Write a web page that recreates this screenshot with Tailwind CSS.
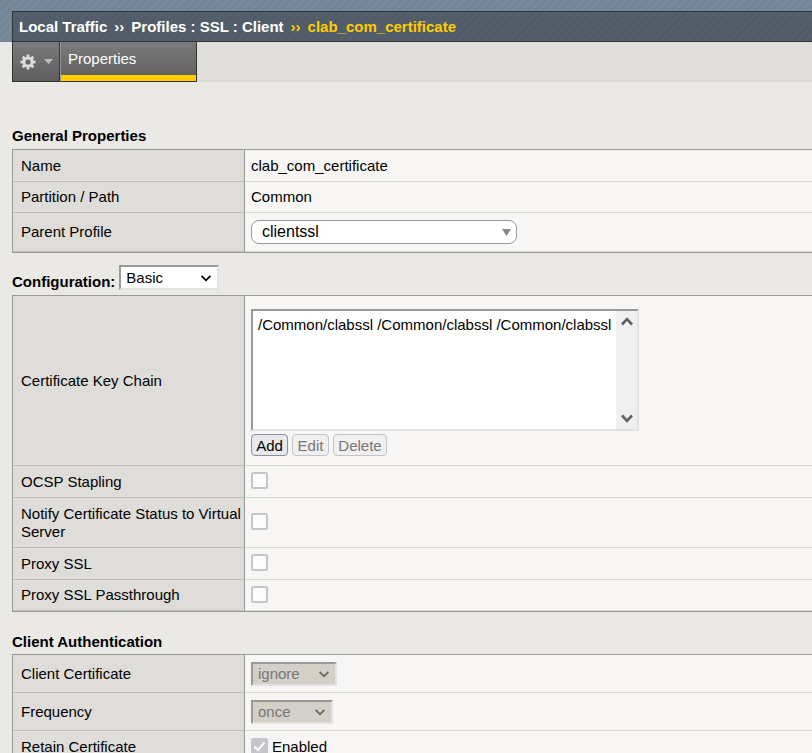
<!DOCTYPE html>
<html lang="en">
<head>
  <meta charset="UTF-8">
  <meta name="viewport" content="width=device-width, initial-scale=1">
  <title>Local Traffic - Profiles : SSL : Client</title>
  <!-- Tailwind CSS CDN -->
  <script src="https://cdn.jsdelivr.net/npm/@tailwindcss/browser@4"></script>
</head>
<body class="h-screen overflow-x-hidden overflow-y-auto [scrollbar-width:none] bg-[#eae9e5] font-['Liberation_Sans',Arial,sans-serif] text-[15px] leading-[18px] text-black">

  <!-- Breadcrumb -->
  <header class="pl-3 pt-[11px] bg-[repeating-linear-gradient(135deg,#738598_0px,#738598_3px,#788a9a_4px,#788a9a_6px)]">
    <nav class="flex items-center h-[31px] pl-1.5 border-y border-l border-[#2f363b] font-bold text-white whitespace-pre bg-[repeating-linear-gradient(135deg,#505c69_0px,#505c69_3px,#555f69_4px,#555f69_6px)]">
      <a href="#">Local Traffic</a>
      <span class="px-[7px]">››</span>
      <a href="#">Profiles : SSL : Client</a>
      <span class="px-[7px] text-[#ffcc00]">››</span>
      <span class="text-[#ffcc00]">clab_com_certificate</span>
    </nav>
  </header>

  <!-- Tabs -->
  <div class="ml-3 flex h-10 bg-[#dedddA]">
    <button type="button" aria-label="Options" class="flex items-center w-12 pl-[7px] gap-2 border-x border-b border-[#333] bg-linear-to-b from-[#7b7b7b] to-[#5e5e5e]">
      <svg class="w-4 h-4 shrink-0" viewBox="0 0 16 16">
        <g fill="#dcdcdc">
          <rect x="6.6" y="0.5" width="2.8" height="15"/>
          <rect x="6.6" y="0.5" width="2.8" height="15" transform="rotate(45 8 8)"/>
          <rect x="6.6" y="0.5" width="2.8" height="15" transform="rotate(90 8 8)"/>
          <rect x="6.6" y="0.5" width="2.8" height="15" transform="rotate(135 8 8)"/>
          <circle cx="8" cy="8" r="5.6"/>
        </g>
        <circle cx="8" cy="8" r="2.6" fill="#666"/>
      </svg>
      <svg class="w-[9px] h-[5px] shrink-0" viewBox="0 0 9 5"><path d="M0 0h9L4.500 5z" fill="#bdbdbd"/></svg>
    </button>
    <a href="#" class="w-[137px] pl-[7px] pt-2 border-l border-l-[#999] border-r border-r-[#333] border-b border-b-[#333] text-white bg-linear-to-b from-[#7b7b7b] to-[#5e5e5e] shadow-[inset_0_-6px_#ffcc00]">Properties</a>
  </div>

  <main class="pl-3">
    <!-- General Properties -->
    <h2 class="pt-[45px] h-[67px] font-bold">General Properties</h2>
    <table class="w-full table-fixed border-separate border-spacing-0 border-y border-l border-[#999]">
      <tbody>
        <tr>
          <th scope="row" class="w-[232px] h-8 pl-2 pr-0 text-left font-normal bg-[#dedddA] border-b border-b-[#c0bfbd] border-r border-r-[#999]">Name</th>
          <td class="pl-1.5 bg-[#f7f6f4] border-b border-[#d9d9d7]">clab_com_certificate</td>
        </tr>
        <tr>
          <th scope="row" class="h-[31px] pl-2 pr-0 text-left font-normal bg-[#dedddA] border-b border-b-[#c0bfbd] border-r border-r-[#999]">Partition / Path</th>
          <td class="pl-1.5 bg-[#f7f6f4] border-b border-[#d9d9d7]">Common</td>
        </tr>
        <tr>
          <th scope="row" class="h-[39px] pl-2 pr-0 text-left font-normal bg-[#dedddA] border-b border-b-[#c0bfbd] border-r border-r-[#999]"><label for="parentProfile">Parent Profile</label></th>
          <td class="pl-1.5 bg-[#f7f6f4] border-b border-[#d9d9d7]">
            <div class="relative w-[266px]">
              <select id="parentProfile" class="block appearance-none w-full h-6 pl-2.5 text-[16px] leading-[18px] bg-white border border-[#999] rounded-lg">
                <option>clientssl</option>
              </select>
              <svg class="absolute right-1.5 top-[9px] w-[9px] h-[7px] pointer-events-none" viewBox="0 0 9 7"><path d="M0 0h9L4.500 7z" fill="#888"/></svg>
            </div>
          </td>
        </tr>
      </tbody>
    </table>

    <!-- Configuration -->
    <div class="flex items-start h-[42px] pt-3 gap-1">
      <label for="configuration" class="pt-2 font-bold">Configuration:</label>
      <div class="relative w-[100px]">
        <select id="configuration" class="block appearance-none w-full h-[25px] pl-[5px] leading-[18px] bg-white border-2 border-t-[#999] border-l-[#999] border-r-[#e3e3e3] border-b-[#e3e3e3]">
          <option>Basic</option>
          <option>Advanced</option>
        </select>
        <svg class="absolute right-2 top-[10px] w-[10px] h-[7px] pointer-events-none" viewBox="0 0 10 7" fill="none" stroke="#000" stroke-width="1.7"><path d="M0.600 0.800L5 5.300L9.400 0.800"/></svg>
      </div>
    </div>
    <table class="w-full table-fixed border-separate border-spacing-0 border-y border-l border-[#999]">
      <tbody>
        <tr>
          <th scope="row" class="w-[232px] h-[170px] pl-2 pr-0 text-left font-normal bg-[#dedddA] border-b border-b-[#c0bfbd] border-r border-r-[#999]"><label for="keyChain">Certificate Key Chain</label></th>
          <td class="pl-1.5 pt-1 bg-[#f7f6f4] border-b border-[#d9d9d7]">
            <div class="flex w-[388px] h-[122px] bg-white border-2 border-t-[#999] border-l-[#999] border-r-[#e3e3e3] border-b-[#e3e3e3]">
              <select id="keyChain" size="6" class="flex-1 min-w-0 appearance-none overflow-hidden pt-[5px]">
                <option class="p-0 pl-[5px] min-h-0">/Common/clabssl /Common/clabssl /Common/clabssl</option>
              </select>
              <div class="flex flex-col items-center justify-between w-[21px] pt-1.5 pb-1.5 bg-[#f0f0f0]">
                <svg class="w-3 h-[9px]" viewBox="0 0 12 9" fill="none" stroke="#606060" stroke-width="2.600"><path d="M1 7.500L6 2.200L11 7.500"/></svg>
                <svg class="w-3 h-[9px]" viewBox="0 0 12 9" fill="none" stroke="#606060" stroke-width="2.600"><path d="M1 1.500L6 6.800L11 1.500"/></svg>
              </div>
            </div>
            <div class="flex gap-1 pt-[3px]">
              <button type="button" class="w-[37px] h-[22px] pt-px bg-[#e9e9ed] border border-[#8f8f9d] rounded">Add</button>
              <button type="button" disabled class="w-[37px] h-[22px] pt-px bg-[#f0f0f1] border border-[#c4c4cc] rounded text-[#777]">Edit</button>
              <button type="button" disabled class="w-[54px] h-[22px] pt-px bg-[#f0f0f1] border border-[#c4c4cc] rounded text-[#777]">Delete</button>
            </div>
          </td>
        </tr>
        <tr>
          <th scope="row" class="h-8 pl-2 pr-0 text-left font-normal bg-[#dedddA] border-b border-b-[#c0bfbd] border-r border-r-[#999]"><label for="ocsp">OCSP Stapling</label></th>
          <td class="pl-1.5 pb-0.5 bg-[#f7f6f4] border-b border-[#d9d9d7]"><input type="checkbox" id="ocsp" disabled class="block appearance-none w-[17px] h-[17px] bg-[#fbfbfa] border-2 border-[#c5c5cc] rounded-xs"></td>
        </tr>
        <tr>
          <th scope="row" class="h-[50px] pl-2 pr-0 text-left font-normal bg-[#dedddA] border-b border-b-[#c0bfbd] border-r border-r-[#999]"><label for="notifyStatus">Notify Certificate Status to Virtual Server</label></th>
          <td class="pl-1.5 pb-0.5 bg-[#f7f6f4] border-b border-[#d9d9d7]"><input type="checkbox" id="notifyStatus" disabled class="block appearance-none w-[17px] h-[17px] bg-[#fbfbfa] border-2 border-[#c5c5cc] rounded-xs"></td>
        </tr>
        <tr>
          <th scope="row" class="h-8 pl-2 pr-0 text-left font-normal bg-[#dedddA] border-b border-b-[#c0bfbd] border-r border-r-[#999]"><label for="proxySsl">Proxy SSL</label></th>
          <td class="pl-1.5 pb-0.5 bg-[#f7f6f4] border-b border-[#d9d9d7]"><input type="checkbox" id="proxySsl" disabled class="block appearance-none w-[17px] h-[17px] bg-[#fbfbfa] border-2 border-[#c5c5cc] rounded-xs"></td>
        </tr>
        <tr>
          <th scope="row" class="h-[31px] pl-2 pr-0 text-left font-normal bg-[#dedddA] border-b border-b-[#c0bfbd] border-r border-r-[#999]"><label for="proxyPassthrough">Proxy SSL Passthrough</label></th>
          <td class="pl-1.5 pb-0.5 bg-[#f7f6f4] border-b border-[#d9d9d7]"><input type="checkbox" id="proxyPassthrough" disabled class="block appearance-none w-[17px] h-[17px] bg-[#fbfbfa] border-2 border-[#c5c5cc] rounded-xs"></td>
        </tr>
      </tbody>
    </table>

    <!-- Client Authentication -->
    <h2 class="pt-[21px] h-[42px] font-bold">Client Authentication</h2>
    <table class="w-full table-fixed border-separate border-spacing-0 border-y border-l border-[#999]">
      <tbody>
        <tr>
          <th scope="row" class="w-[232px] h-[38px] pl-2 pr-0 text-left font-normal bg-[#dedddA] border-b border-b-[#c0bfbd] border-r border-r-[#999]"><label for="clientCertificate">Client Certificate</label></th>
          <td class="pl-1.5 bg-[#f7f6f4] border-b border-[#d9d9d7]">
            <div class="relative w-[86px]">
              <select id="clientCertificate" disabled class="block appearance-none w-full h-6 pl-[5px] leading-[18px] bg-[#d4d0c8] text-[#777] opacity-100 border-2 border-t-[#999] border-l-[#999] border-r-[#e3e3e3] border-b-[#e3e3e3]">
                <option>ignore</option>
              </select>
              <svg class="absolute right-2 top-[9px] w-[10px] h-[7px] pointer-events-none" viewBox="0 0 10 7" fill="none" stroke="#666" stroke-width="1.700"><path d="M0.600 0.800L5 5.300L9.400 0.800"/></svg>
            </div>
          </td>
        </tr>
        <tr>
          <th scope="row" class="h-[38px] pl-2 pr-0 text-left font-normal bg-[#dedddA] border-b border-b-[#c0bfbd] border-r border-r-[#999]"><label for="frequency">Frequency</label></th>
          <td class="pl-1.5 bg-[#f7f6f4] border-b border-[#d9d9d7]">
            <div class="relative w-[82px]">
              <select id="frequency" disabled class="block appearance-none w-full h-6 pl-[5px] leading-[18px] bg-[#d4d0c8] text-[#777] opacity-100 border-2 border-t-[#999] border-l-[#999] border-r-[#e3e3e3] border-b-[#e3e3e3]">
                <option>once</option>
              </select>
              <svg class="absolute right-2 top-[9px] w-[10px] h-[7px] pointer-events-none" viewBox="0 0 10 7" fill="none" stroke="#666" stroke-width="1.700"><path d="M0.600 0.800L5 5.300L9.400 0.800"/></svg>
            </div>
          </td>
        </tr>
        <tr>
          <th scope="row" class="h-8 pl-2 pr-0 text-left font-normal bg-[#dedddA] border-b border-b-[#c0bfbd] border-r border-r-[#999]">Retain Certificate</th>
          <td class="pl-1.5 bg-[#f7f6f4] border-b border-[#d9d9d7]">
            <label class="flex items-center gap-1">
              <span class="relative">
                <input type="checkbox" checked disabled class="block appearance-none w-[17px] h-[17px] bg-[#c5c5cc] rounded-xs">
                <svg class="absolute inset-0 w-[17px] h-[17px]" viewBox="0 0 17 17" fill="none" stroke="#fff" stroke-width="2"><path d="M3.500 8.500L7 12L13.500 4.500"/></svg>
              </span>
              Enabled
            </label>
          </td>
        </tr>
      </tbody>
    </table>
  </main>
</body>
</html>
